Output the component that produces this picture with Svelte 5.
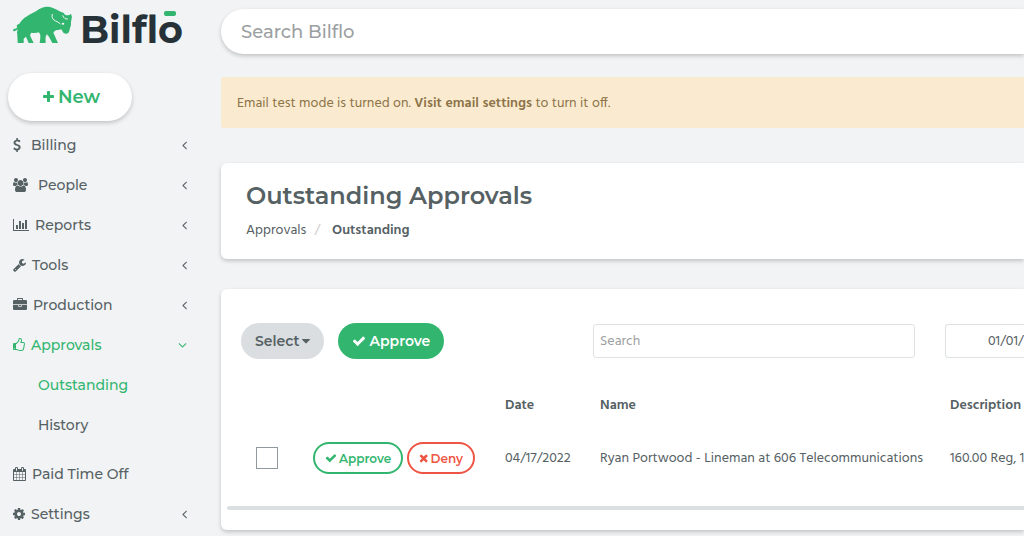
<script>
    // each icon: [viewBox, path]
    const icons = {
        plus: ['192 0 1408 1792', 'M1600 736v192q0 40-28 68t-68 28h-416v416q0 40-28 68t-68 28h-192q-40 0-68-28t-28-68v-416h-416q-40 0-68-28t-28-68v-192q0-40 28-68t68-28h416v-416q0-40 28-68t68-28h192q40 0 68 28t28 68v416h416q40 0 68 28t28 68z'],
        dollar: ['384 0 1024 1792', 'M1362 1185q0 153-99.5 263.5t-258.5 136.5v175q0 14-9 23t-23 9h-135q-13 0-22.5-9.5t-9.5-22.5v-175q-66-9-127.5-31t-101.5-44.5-74-48-46.5-37.5-17.5-18q-17-21-2-41l103-135q7-10 23-12 15-2 24 9l2 2q113 99 243 125 37 8 74 8 81 0 142.5-43t61.5-122q0-28-15-53t-33.5-42-58.5-37.5-66-32-80-32.5q-39-16-61.5-25t-61.5-26.5-62.5-31-56.5-35.5-53.5-42.5-43.5-49-35.5-58-21-66.5-8.5-78q0-138 98-242t255-134v-180q0-13 9.5-22.5t22.5-9.5h135q14 0 23 9t9 23v176q57 6 110.5 23t87 33.5 63.5 37.5 39 29 15 14q17 18 5 38l-81 146q-8 15-23 16-14 3-27-7-3-3-14.5-12t-39-26.5-58.5-32-74.5-26-85.5-11.5q-95 0-155 43t-60 111q0 26 8.5 48t29.5 41.5 39.5 33 56 31 60.5 27 70 27.5q53 20 81 31.5t76 35 75.5 42.5 62 50 53 63.5 31.5 76.5 13 94z'],
        users: ['0 0 1920 1792', 'M593 896q-162 5-265 128h-134q-82 0-138-40.5t-56-118.5q0-353 124-353 6 0 43.5 21t97.5 42.5 119 21.5q67 0 133-23-5 37-5 66 0 139 81 256zm1071 637q0 120-73 189.5t-194 69.5h-874q-121 0-194-69.5t-73-189.5q0-53 3.5-103.5t14-109 26.5-108.5 43-97.5 62-81 85.5-53.5 111.5-20q10 0 43 21.5t73 48 107 48 135 21.5 135-21.5 107-48 73-48 43-21.5q61 0 111.5 20t85.5 53.5 62 81 43 97.5 26.5 108.5 14 109 3.5 103.5zm-1024-1277q0 106-75 181t-181 75-181-75-75-181 75-181 181-75 181 75 75 181zm704 384q0 159-112.5 271.5t-271.5 112.5-271.5-112.5-112.5-271.5 112.5-271.5 271.5-112.5 271.5 112.5 112.5 271.5zm576 225q0 78-56 118.5t-138 40.5h-134q-103-123-265-128 81-117 81-256 0-29-5-66 66 23 133 23 59 0 119-21.5t97.5-42.5 43.5-21q124 0 124 353zm-128-609q0 106-75 181t-181 75-181-75-75-181 75-181 181-75 181 75 75 181z'],
        chart: ['0 0 2048 1792', 'M640 896v512h-256v-512h256zm384-512v1024h-256v-1024h256zm1024 1152v128h-2048v-1536h128v1408h1920zm-640-896v768h-256v-768h256zm384-384v1152h-256v-1152h256z'],
        wrench: ['64 0 1664 1792', 'M448 1472q0-26-19-45t-45-19-45 19-19 45 19 45 45 19 45-19 19-45zm644-420l-682 682q-37 37-90 37-52 0-91-37l-106-108q-38-36-38-90 0-53 38-91l681-681q39 98 114.5 173.5t173.5 114.5zm634-435q0 39-23 106-47 134-164.5 217.5t-258.5 83.5q-185 0-316.5-131.5t-131.5-316.5 131.5-316.5 316.5-131.5q58 0 121.5 16.5t107.5 46.5q16 11 16 28t-16 28l-293 169v224l193 107q5-3 79-48.5t135.5-81 70.5-35.5q15 0 23.5 10t8.5 25z'],
        briefcase: ['0 0 1792 1792', 'M640 256h512v-128h-512v128zm1152 640v480q0 66-47 113t-113 47h-1472q-66 0-113-47t-47-113v-480h672v160q0 26 19 45t45 19h320q26 0 45-19t19-45v-160h672zm-768 0v128h-256v-128h256zm768-480v384h-1792v-384q0-66 47-113t113-47h352v-160q0-40 28-68t68-28h576q40 0 68 28t28 68v160h352q66 0 113 47t47 113z'],
        thumb: ['128 0 1536 1792', 'M384 1344q0-26-19-45t-45-19-45 19-19 45 19 45 45 19 45-19 19-45zm1152-576q0-51-39-89.5t-89-38.5h-352q0-58 48-159.5t48-160.5q0-98-32-145t-128-47q-26 26-38 85t-30.5 125.5-59.5 109.5q-22 23-77 91-4 5-23 30t-31.5 41-34.5 42.5-40 44-38.5 35.5-40 27-35.5 9h-32v640h32q13 0 31.5 3t33 6.5 38 11 35 11.5 35.5 12.5 29 10.5q211 73 342 73h121q192 0 192-167 0-26-5-56 30-16 47.5-52.5t17.5-73.5-18-69q53-50 53-119 0-25-10-55.5t-25-47.5q32-1 53.5-47t21.5-81zm128-1q0 89-49 163 9 33 9 69 0 77-38 144 3 21 3 43 0 101-60 178 1 139-85 219.5t-227 80.5h-129q-96 0-189.5-22.5t-216.5-65.5q-116-40-138-40h-288q-53 0-90.5-37.5t-37.5-90.5v-640q0-53 37.5-90.5t90.5-37.5h274q36-24 137-155 58-75 107-128 24-25 35.5-85.5t30.5-126.5 62-108q39-37 90-37 84 0 151 32.5t102 101.5 35 186q0 93-48 192h176q104 0 180 76t76 179z'],
        calendar: ['64 0 1664 1792', 'M192 1664h288v-288h-288v288zm352 0h320v-288h-320v288zm-352-352h288v-320h-288v320zm352 0h320v-320h-320v320zm-352-384h288v-288h-288v288zm736 736h320v-288h-320v288zm-384-736h320v-288h-320v288zm768 736h288v-288h-288v288zm-384-352h320v-320h-320v320zm-352-864v-288q0-13-9.5-22.5t-22.5-9.5h-64q-13 0-22.5 9.5t-9.5 22.5v288q0 13 9.5 22.5t22.5 9.5h64q13 0 22.5-9.5t9.5-22.5zm736 864h288v-320h-288v320zm-384-384h320v-288h-320v288zm384 0h288v-288h-288v288zm32-480v-288q0-13-9.5-22.5t-22.5-9.5h-64q-13 0-22.5 9.5t-9.5 22.5v288q0 13 9.5 22.5t22.5 9.5h64q13 0 22.5-9.5t9.5-22.5zm384-64v1280q0 52-38 90t-90 38h-1408q-52 0-90-38t-38-90v-1280q0-52 38-90t90-38h128v-96q0-66 47-113t113-47h64q66 0 113 47t47 113v96h384v-96q0-66 47-113t113-47h64q66 0 113 47t47 113v96h128q52 0 90 38t38 90z'],
        cog: ['128 0 1536 1792', 'M1152 896q0-106-75-181t-181-75-181 75-75 181 75 181 181 75 181-75 75-181zm512-109v222q0 12-8 23t-20 13l-185 28q-19 54-39 91 35 50 107 138 10 12 10 25t-9 23q-27 37-99 108t-94 71q-12 0-26-9l-138-108q-44 23-91 38-16 136-29 186-7 28-36 28h-222q-14 0-24.5-8.5t-11.5-21.5l-28-184q-49-16-90-37l-141 107q-10 9-25 9-14 0-25-11-126-114-165-168-7-10-7-23 0-12 8-23 15-21 51-66.5t54-70.5q-27-50-41-99l-183-27q-13-2-21-12.5t-8-23.5v-222q0-12 8-23t19-13l186-28q14-46 39-92-40-57-107-138-10-12-10-24 0-10 9-23 26-36 98.5-107.5t94.5-71.5q13 0 26 10l138 107q44-23 91-38 16-136 29-186 7-28 36-28h222q14 0 24.5 8.5t11.5 21.5l28 184q49 16 90 37l142-107q9-9 24-9 13 0 25 10 129 119 165 170 7 8 7 22 0 12-8 23-15 21-51 66.5t-54 70.5q26 50 41 98l183 28q13 2 21 12.5t8 23.5z'],
        left: ['576 0 640 1792', 'M1203 544q0 13-10 23l-393 393 393 393q10 10 10 23t-10 23l-50 50q-10 10-23 10t-23-10l-466-466q-10-10-10-23t10-23l466-466q10-10 23-10t23 10l50 50q10 10 10 23z'],
        down: ['320 0 1152 1792', 'M1395 736q0 13-10 23l-466 466q-10 10-23 10t-23-10l-466-466q-10-10-10-23t10-23l50-50q10-10 23-10t23 10l393 393 393-393q10-10 23-10t23 10l50 50q10 10 10 23z'],
        check: ['0 0 1792 1792', 'M1671 566q0 40-28 68l-724 724-136 136q-28 28-68 28t-68-28l-136-136-362-362q-28-28-28-68t28-68l136-136q28-28 68-28t68 28l294 295 656-657q28-28 68-28t68 28l136 136q28 28 28 68z'],
        times: ['192 0 1408 1792', 'M1490 1322q0 40-28 68l-136 136q-28 28-68 28t-68-28l-294-294-294 294q-28 28-68 28t-68-28l-136-136q-28-28-28-68t28-68l294-294-294-294q-28-28-28-68t28-68l136-136q28-28 68-28t68 28l294 294 294-294q28-28 68-28t68 28l136 136q28 28 28 68t-28 68l-294 294 294 294q28 28 28 68z'],
        caret: ['384 0 1024 1792', 'M1408 704q0 26-19 45l-448 448q-19 19-45 19t-45-19l-448-448q-19-19-19-45t19-45 45-19h896q26 0 45 19t19 45z']
    };

    const menu = [
        { label: 'Billing', icon: 'dollar', wide: true, arrow: true },
        { label: 'People', icon: 'users', wide: true, arrow: true },
        { label: 'Reports', icon: 'chart', arrow: true },
        { label: 'Tools', icon: 'wrench', arrow: true },
        { label: 'Production', icon: 'briefcase', arrow: true },
        { label: 'Approvals', icon: 'thumb', arrow: true, children: ['Outstanding', 'History'] },
        { label: 'Paid Time Off', icon: 'calendar' },
        { label: 'Settings', icon: 'cog', arrow: true }
    ];

    const rows = [
        { id: 1, date: '04/17/2022', name: 'Ryan Portwood - Lineman at 606 Telecommunications', description: '160.00 Reg, 1' }
    ];

    let open = $state('Approvals');
    let current = $state('Outstanding');
    let search = $state('');
    let filter = $state('');
    let range = $state('01/01/');
    let selected = $state([]);

    const toggle = (item) => {
        if (item.arrow) open = open === item.label ? '' : item.label;
    }
</script>

{#snippet icon(name)}
    <svg class="icon" viewBox={icons[name][0]} aria-hidden="true"><path d={icons[name][1]} /></svg>
{/snippet}

<div class="layout">
    <aside>
        <a class="logo" href="#home">
            <svg viewBox="0 0 180 44" role="img" aria-label="Bilflo">
                <g transform="scale(.33333) translate(-24 -9)">
                    <path class="green" d="M39 93 L41 86 Q48 88 52 82 Q46 76 58 71 C70 52 88 45 108 34 C125 21 141 17 159 24 C169 27 175 33 186 37 Q192 38 195 44 Q206 49 213 41 Q218 50 214 61 Q212 66 213 72 Q213 79 210 84 Q209 92 205 99 Q198 104 190 98 L184 88 Q176 91 170 90 Q163 92 160 98 L174 129 H157 L146 109 Q143 107 141 102 L137 110 Q136 116 137 129 H119 L121 114 Q122 103 117 97 Q106 101 94 98 Q88 104 92 111 L101 129 H86 L78 110 L71 116 L71 129 H53 L52 106 Q49 95 54 87 Q48 95 39 93 Z" />
                    <path class="line" d="M157 42 Q153 57 167 63 Q175 66 181 72" />
                    <path class="line" d="M188 46 Q192 58 204 57" />
                    <ellipse class="dot" cx="189" cy="71" rx="4" ry="3" />
                </g>
                <text x="72" y="40">Bilflo</text>
                <rect class="green" x="156" y="8" width="12" height="5" rx="2" />
            </svg>
        </a>
        <button class="new">{@render icon('plus')}New</button>
        <nav>
            <ul>
                {#each menu as item (item.label)}
                    <li>
                        <a href="#menu" class="item" class:active={open === item.label} class:wide={item.wide} onclick={() => toggle(item)}>
                            {@render icon(item.icon)}
                            <span>{item.label}</span>
                            {#if item.arrow}
                                <i class="arrow">{@render icon(open === item.label ? 'down' : 'left')}</i>
                            {/if}
                        </a>
                        {#if item.children && open === item.label}
                            <ul class="sub">
                                {#each item.children as child (child)}
                                    <li><a href="#sub" class:active={current === child} onclick={() => current = child}>{child}</a></li>
                                {/each}
                            </ul>
                        {/if}
                    </li>
                {/each}
            </ul>
        </nav>
    </aside>

    <main>
        <input class="search" type="text" placeholder="Search Bilflo" aria-label="Search Bilflo" bind:value={search} />

        <div class="alert">Email test mode is turned on. <a href="#email">Visit email settings</a> to turn it off.</div>

        <header class="card heading">
            <h1>Outstanding Approvals</h1>
            <ol>
                <li><a href="#approvals">Approvals</a></li>
                <li><strong>Outstanding</strong></li>
            </ol>
        </header>

        <section class="card">
            <div class="toolbar">
                <div class="actions">
                    <button class="btn grey">Select{@render icon('caret')}</button>
                    <button class="btn solid">{@render icon('check')}Approve</button>
                </div>
                <input type="text" placeholder="Search" aria-label="Search" bind:value={filter} />
                <input class="range" type="text" aria-label="Date range" bind:value={range} />
            </div>

            <div class="table-wrap">
                <table>
                    <thead>
                        <tr>
                            <th class="c-check"></th>
                            <th class="c-actions"></th>
                            <th class="c-date">Date</th>
                            <th>Name</th>
                            <th class="c-desc">Description</th>
                        </tr>
                    </thead>
                    <tbody>
                        {#each rows as row (row.id)}
                            <tr>
                                <td><input type="checkbox" aria-label="Select row" value={row.id} bind:group={selected} /></td>
                                <td>
                                    <div class="row-actions">
                                        <button class="small approve">{@render icon('check')}Approve</button>
                                        <button class="small deny">{@render icon('times')}Deny</button>
                                    </div>
                                </td>
                                <td>{row.date}</td>
                                <td>{row.name}</td>
                                <td>{row.description}</td>
                            </tr>
                        {/each}
                    </tbody>
                </table>
            </div>
            <div class="scrollbar"></div>
        </section>
    </main>
</div>

<style>
:global(body) {
    background: #f1f3f5;
    color: #566164;
    font-family: Hind, "Noto Sans", sans-serif;
    font-size: 14px;
    line-height: 20px;
}
* {
    box-sizing: border-box;
}
a {
    color: inherit;
    text-decoration: none;
}
ul, ol {
    list-style: none;
    margin: 0;
    padding: 0;
}
button, input {
    font-family: inherit;
    font-size: inherit;
    color: inherit;
}
button {
    font-family: Montserrat, Inter, sans-serif;
    cursor: pointer;
}
.icon {
    display: block;
    flex: none;
    height: 14px;
    fill: currentColor;
    overflow: visible;
}
.layout {
    display: flex;
    min-height: 100vh;
    overflow: hidden;
}

/* sidebar */
aside {
    flex: 0 0 221px;
    padding: 3px 8px 0;
    font-family: Montserrat, Inter, sans-serif;
    font-weight: 500;
}
.logo svg {
    display: block;
    width: 180px;
    height: 44px;
    overflow: visible;
}
.logo text {
    font-family: Montserrat, Inter, sans-serif;
    font-size: 38px;
    font-weight: 700;
    fill: #263238;
}
.green {
    fill: #32b66f;
}
.line {
    fill: none;
    stroke: #f1f3f5;
    stroke-width: 3;
}
.dot {
    fill: #f1f3f5;
}
.new {
    display: flex;
    align-items: center;
    justify-content: center;
    gap: 4px;
    width: 124px;
    height: 48px;
    margin-top: 26px;
    padding: 0 0 0 3px;
    border: 0;
    border-radius: 24px;
    background: #fff;
    box-shadow: 0 2px 4px rgba(0, 0, 0, 0.2);
    color: #32b66f;
    font-size: 18px;
    font-weight: 600;
}
nav {
    padding: 4px 0 0 5px;
}
.item, .sub a {
    display: flex;
    align-items: center;
    height: 40px;
}
.item {
    gap: 6px;
}
.item.wide {
    gap: 10px;
}
.sub {
    padding: 0 0 9px 25px;
}
.active {
    color: #32b66f;
}
.arrow {
    display: flex;
    width: 9px;
    justify-content: flex-end;
    margin: 0 26px 0 auto;
}

/* content */
main {
    flex: 1;
    min-width: 0;
    padding-top: 9px;
}
.search {
    display: block;
    width: 100%;
    height: 45px;
    padding: 0 20px;
    border: 0;
    border-radius: 23px 0 0 23px;
    background: #fff;
    box-shadow: 0 2px 4px rgba(0, 0, 0, 0.2);
    font-family: Montserrat, Inter, sans-serif;
    font-size: 18px;
    font-weight: 500;
}
input::placeholder {
    color: #9c9fa1;
    opacity: 1;
}
.alert {
    margin-top: 23px;
    padding: 17px 16px 14px;
    border-radius: 3px 0 0 3px;
    background: #faebd0;
    color: #8d7348;
}
.alert a {
    font-weight: 600;
}
.card {
    margin-top: 30px;
    border-radius: 6px 0 0 6px;
    background: #fff;
    box-shadow: 0 2px 4px rgba(0, 0, 0, 0.2);
    overflow: hidden;
}
.heading {
    margin-top: 35px;
    padding: 17px 25px 18px;
}
h1 {
    margin: 0;
    font-family: Montserrat, Inter, sans-serif;
    font-size: 24px;
    font-weight: 600;
    line-height: 32px;
}
ol {
    display: flex;
    margin-top: 9px;
}
ol li + li::before {
    content: "/";
    padding: 0 12px 0 8px;
    color: #ccc;
}
strong {
    font-weight: 600;
}
.toolbar {
    display: grid;
    grid-template-columns: 322px minmax(0, 1fr) 79px;
    gap: 30px;
    align-items: center;
    padding: 34px 0 0 20px;
}
.actions, .row-actions, .btn, .small {
    display: flex;
    align-items: center;
}
.actions {
    gap: 14px;
}
.btn {
    gap: 3px;
    height: 36px;
    padding: 0 14px;
    border: 0;
    border-radius: 18px;
    font-size: 14px;
    font-weight: 600;
}
.grey {
    background: #dadee1;
}
.solid {
    background: #32b66f;
    color: #fff;
}
.toolbar input {
    width: 100%;
    height: 34px;
    padding: 0 6px;
    border: 1px solid #dfe2e4;
    border-radius: 3px;
    background: #fff;
}
.toolbar .range {
    padding: 0 0 0 42px;
    border-right: 0;
    border-radius: 3px 0 0 3px;
}
.table-wrap {
    margin: 25px 0 16px 20px;
    overflow: hidden;
}
table {
    width: 100%;
    table-layout: fixed;
    border-collapse: collapse;
}
th, td {
    height: 42px;
    padding: 2px 0 0 15px;
    text-align: left;
    white-space: nowrap;
}
th {
    font-weight: 600;
}
td {
    height: 64px;
}
td:has(input), td:has(button) {
    padding-top: 0;
}
.c-check {
    width: 57px;
}
.c-actions {
    width: 192px;
}
.c-date {
    width: 95px;
}
.c-desc {
    width: 89px;
}
input[type="checkbox"] {
    display: block;
    appearance: none;
    width: 22px;
    height: 22px;
    margin: 0;
    border: 1px solid #8f999e;
    background: #fff;
}
input[type="checkbox"]:checked {
    background: #32b66f;
}
.row-actions {
    gap: 4px;
}
.small {
    gap: 2px;
    height: 32px;
    padding: 0 10px;
    border: 2px solid;
    border-radius: 16px;
    background: #fff;
    font-size: 12px;
    font-weight: 600;
}
.small .icon {
    height: 12px;
}
.approve {
    color: #32b66f;
}
.deny {
    color: #ee5544;
}
.scrollbar {
    height: 4px;
    margin: 0 0 20px 6px;
    border-radius: 2px 0 0 2px;
    background: #dadfe2;
}
</style>
